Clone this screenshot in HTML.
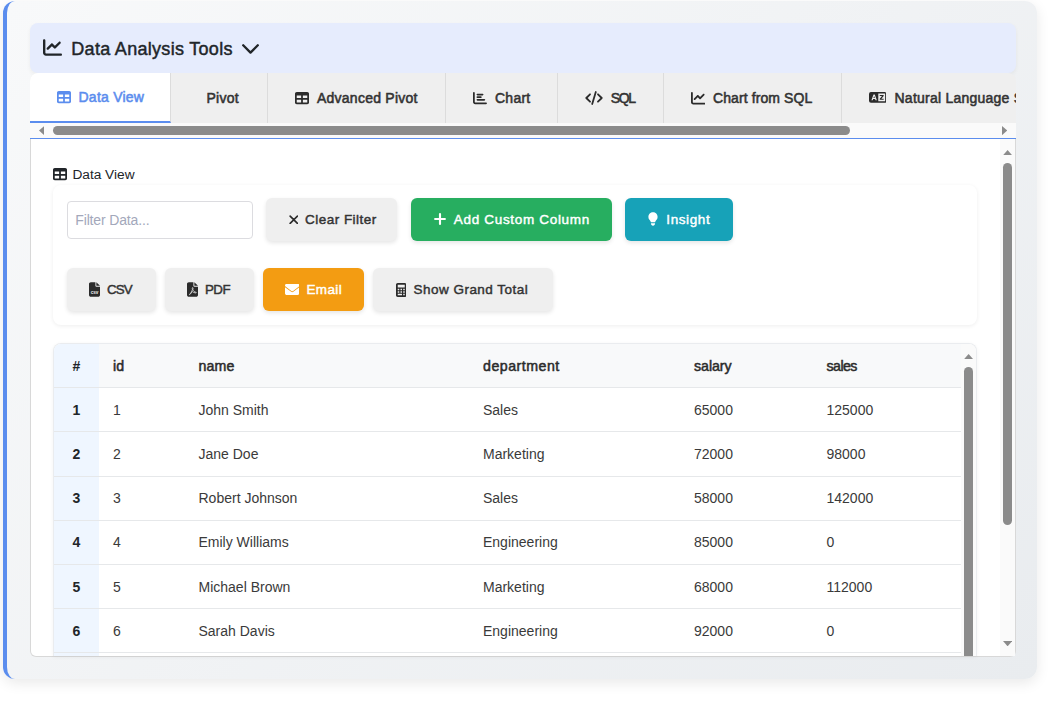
<!DOCTYPE html>
<html>
<head>
<meta charset="utf-8">
<title>Data Analysis Tools</title>
<style>
*{box-sizing:border-box;margin:0;padding:0}
html,body{width:1048px;height:703px;overflow:hidden;background:#fff}
body{font-family:"Liberation Sans",sans-serif;color:#212529;position:relative}
.abs,body>div,body>svg,body>span,body>div div,body>div span,body>div svg{position:absolute}
span{white-space:nowrap}
#card{left:3px;top:1px;width:1034.4px;height:677.7px;border-left:4px solid #5b8dee;border-radius:12px;
  background:linear-gradient(135deg,#f8f9fa 0%,#e9ecef 100%);box-shadow:0 4px 14px rgba(0,0,0,.09)}
#hdr{left:30px;top:23px;width:986px;height:50px;background:#e6ecfd;border-radius:8px;box-shadow:0 2px 4px rgba(0,0,0,.05)}
#hdr .t{left:41.300px;top:14.600px;font-size:18px;letter-spacing:.3px;line-height:22px;font-weight:400;color:#212529;-webkit-text-stroke:.45px #212529}
#tabs{left:30px;top:73px;width:986px;height:50px;background:#efefef;overflow:hidden;border-radius:8px 8px 0 0}
.tab{top:0;height:50px;border-right:1px solid #dcdcdc}
.tab span{top:0;font-size:14px;font-weight:400;color:#333;line-height:51.400px;letter-spacing:.24px;-webkit-text-stroke:.55px #333}
.tab svg{fill:#2b2b2b}
.tab.on{background:#fff;border-bottom:2px solid #5b8dee}
.tab.on span{color:#5b8dee;-webkit-text-stroke-color:#5b8dee;line-height:48.900px}
.tab.on svg{fill:#5b8dee}
#hsb{left:30px;top:123px;width:986px;height:15px;background:#fafafa}
#hsb .th{left:23px;top:3px;width:797px;height:9px;border-radius:4.5px;background:#8b8b8b}
.tri{width:0;height:0;border-style:solid}
#bline{left:30px;top:138px;width:986px;height:1px;background:#5b8dee}
#panel{left:30px;top:139px;width:986px;height:518px;background:#fff;border:1px solid #d8d8d8;border-top:none;border-radius:0 0 6px 6px;overflow:hidden}
</style>
</head>
<body>
<div id="card"></div>

<div id="hdr">
  <svg style="left:13px;top:15.3px" width="19" height="19" viewBox="0 0 512 512"><path fill="#212529" d="M64 64c0-17.700-14.300-32-32-32S0 46.300 0 64V400c0 44.200 35.800 80 80 80H480c17.700 0 32-14.300 32-32s-14.300-32-32-32H80c-8.800 0-16-7.200-16-16V64zm406.600 86.600c12.500-12.500 12.500-32.800 0-45.300s-32.800-12.500-45.300 0L320 210.700l-57.400-57.400c-12.500-12.500-32.800-12.500-45.300 0l-112 112c-12.500 12.500-12.500 32.800 0 45.300s32.800 12.500 45.300 0L240 221.300l57.400 57.400c12.500 12.500 32.800 12.500 45.300 0l128-128z"/></svg>
  <span class="t">Data Analysis Tools</span>
  <svg style="left:211px;top:20px" width="19" height="12" viewBox="0 0 19 12"><path d="M2.2 2.2 L9.5 9.6 L16.8 2.2" fill="none" stroke="#212529" stroke-width="2.3" stroke-linecap="round" stroke-linejoin="round"/></svg>
</div>

<div id="tabs">
  <div class="tab on" style="left:0;width:141px">
    <svg style="left:26.700px;top:16.600px" width="14" height="14" viewBox="0 0 512 512"><path fill-rule="evenodd" d="M64 32h384c35.300 0 64 28.700 64 64v320c0 35.300-28.700 64-64 64H64c-35.300 0-64-28.700-64-64V96c0-35.300 28.700-64 64-64zM64 160v96h160v-96zM288 160v96h160v-96zM64 320v96h160v-96zM288 320v96h160v-96z"/></svg>
    <span style="left:48.5px">Data View</span>
  </div>
  <div class="tab" style="left:141px;width:97px"><span style="left:35.5px">Pivot</span></div>
  <div class="tab" style="left:238px;width:178px">
    <svg style="left:26.500px;top:18px" width="14" height="14" viewBox="0 0 512 512"><path fill-rule="evenodd" d="M64 32h384c35.300 0 64 28.700 64 64v320c0 35.300-28.700 64-64 64H64c-35.300 0-64-28.700-64-64V96c0-35.300 28.700-64 64-64zM64 160v96h160v-96zM288 160v96h160v-96zM64 320v96h160v-96zM288 320v96h160v-96z"/></svg>
    <span style="left:49px">Advanced Pivot</span>
  </div>
  <div class="tab" style="left:416px;width:112px">
    <svg style="left:26.500px;top:18px" width="14" height="14" viewBox="0 0 512 512"><path d="M32 32c17.700 0 32 14.300 32 32v336c0 8.800 7.200 16 16 16h400c17.700 0 32 14.300 32 32s-14.300 32-32 32H80c-44.200 0-80-35.800-80-80V64c0-17.700 14.300-32 32-32zM128 128c0-17.700 14.300-32 32-32h192c17.700 0 32 14.300 32 32s-14.300 32-32 32H160c-17.700 0-32-14.300-32-32zM160 192h128c17.700 0 32 14.300 32 32s-14.300 32-32 32H160c-17.700 0-32-14.300-32-32s14.300-32 32-32zM160 288h256c17.700 0 32 14.300 32 32s-14.300 32-32 32H160c-17.700 0-32-14.300-32-32s14.300-32 32-32z"/></svg>
    <span style="left:49px">Chart</span>
  </div>
  <div class="tab" style="left:528px;width:106px">
    <svg style="left:27px;top:18px" width="18" height="14" viewBox="0 0 18 14"><path d="M5 3.300 L1.300 7 L5 10.700 M13 3.300 L16.700 7 L13 10.700 M10.800 1 L7.200 13" fill="none" stroke="#2b2b2b" stroke-width="1.800" stroke-linecap="round" stroke-linejoin="round"/></svg>
    <span style="left:52.700px;letter-spacing:-1.300px">SQL</span>
  </div>
  <div class="tab" style="left:634px;width:178px">
    <svg style="left:26.500px;top:18px" width="14.500" height="14.500" viewBox="0 0 512 512"><path d="M64 64c0-17.700-14.300-32-32-32S0 46.300 0 64V400c0 44.200 35.800 80 80 80H480c17.700 0 32-14.300 32-32s-14.300-32-32-32H80c-8.800 0-16-7.200-16-16V64zm406.600 86.600c12.500-12.500 12.500-32.800 0-45.300s-32.800-12.500-45.300 0L320 210.700l-57.400-57.400c-12.500-12.500-32.800-12.500-45.300 0l-112 112c-12.500 12.500-12.500 32.800 0 45.300s32.800 12.500 45.300 0L240 221.300l57.400 57.400c12.500 12.500 32.800 12.500 45.300 0l128-128z"/></svg>
    <span style="left:49px;letter-spacing:.1px">Chart from SQL</span>
  </div>
  <div class="tab" style="left:812px;width:260px;border-right:none">
    <svg style="left:26.700px;top:19.300px" width="17.600" height="10.800" viewBox="0 0 36 22"><path fill-rule="evenodd" d="M4 0h28a4 4 0 0 1 4 4v14a4 4 0 0 1-4 4H4a4 4 0 0 1-4-4V4a4 4 0 0 1 4-4zM19 3v16h14V3zM9.200 5 L5 17h2.600l.8-2.600h4.200l.8 2.600H16L11.800 5zM10.500 8.200l1.400 4.200H9.100zM22 6h8v2.200l-4.600 5.600H30V16h-8v-2.200l4.600-5.600H22z"/></svg>
    <span style="left:52.500px;">Natural Language SQL</span>
  </div>
</div>

<div id="hsb">
  <svg style="left:8.900px;top:3px" width="5.300" height="9.200" viewBox="0 0 5.300 9.200"><path fill="#8b8b8b" d="M5.300 0V9.200L0 4.600z"/></svg>
  <div class="th"></div>
  <svg style="left:972px;top:3px" width="5.300" height="9.200" viewBox="0 0 5.300 9.200"><path fill="#8b8b8b" d="M0 0V9.200L5.300 4.600z"/></svg>
</div>
<div id="bline"></div>
<div id="panel"></div>
<style>
.lbl{left:72.400px;top:166.500px;font-size:13.700px;line-height:16px;color:#212529}
#fcard{left:53px;top:185px;width:924px;height:140px;background:#fff;border-radius:8px;box-shadow:0 1px 4px rgba(0,0,0,.07)}
#inp{left:67px;top:201px;width:186px;height:38px;border:1px solid #dcdce0;border-radius:4px;background:#fff}
#inp span{left:7.300px;top:0;line-height:37px;font-size:14px;letter-spacing:-.15px;color:#a3a8bb}
.btn{border-radius:6px;background:#efefef;box-shadow:0 2px 4px rgba(0,0,0,.1);height:43px}
.btn span{top:0;line-height:44.600px;letter-spacing:.48px;font-size:13.500px;font-weight:400;color:#333;-webkit-text-stroke:.45px #333}
.btn.c span{color:#fff;-webkit-text-stroke-color:#fff}
.btn svg{fill:#2b2b2b}
.btn.c svg{fill:#fff}
#tbl{left:53px;top:343px;width:924px;height:313px;border:1px solid #eaecef;border-bottom:none;border-radius:8px 8px 0 0;overflow:hidden;background:#fff;box-shadow:0 1px 4px rgba(0,0,0,.05)}
#tbl .hd{left:0;top:0;width:907px;height:43px;background:#f8f9fa}
#tbl .nc{left:0;top:0;width:45px;height:320px;background:#eff6ff}
#tbl .ln{left:0;width:907px;height:1px;background:#e6e8ea}
#tbl span{font-size:14px;line-height:16px;color:#3a3a3a;letter-spacing:0}
#tbl span.h{font-weight:400;color:#2b2b2b;letter-spacing:.1px;font-size:14.200px;-webkit-text-stroke:.5px #2b2b2b}
#tbl span.n{font-weight:700;-webkit-text-stroke:0;color:#212529;left:0;width:45px;text-align:center;letter-spacing:0;font-size:14px}
.vsb{background:#fafafa;width:15px}
.vsb .th{left:3px;width:9px;border-radius:4.500px;background:#8b8b8b}
</style>
<svg style="left:52.800px;top:166.800px" width="14" height="14" viewBox="0 0 512 512"><path fill="#212529" fill-rule="evenodd" d="M64 32h384c35.300 0 64 28.700 64 64v320c0 35.300-28.700 64-64 64H64c-35.300 0-64-28.700-64-64V96c0-35.300 28.700-64 64-64zM64 160v96h160v-96zM288 160v96h160v-96zM64 320v96h160v-96zM288 320v96h160v-96z"/></svg>
<span class="lbl">Data View</span>
<div id="fcard"></div>
<div id="inp"><span>Filter Data...</span></div>

<div class="btn" style="left:266px;top:198px;width:131px">
  <svg style="left:22.800px;top:16.800px" width="9.600" height="9.600" viewBox="0 0 10 10"><path d="M1.200 1.200 L8.800 8.800 M8.800 1.200 L1.200 8.800" fill="none" stroke="#2b2b2b" stroke-width="1.700" stroke-linecap="round"/></svg>
  <span style="left:39px">Clear Filter</span>
</div>
<div class="btn c" style="left:411px;top:198px;width:201px;background:#27ae60">
  <svg style="left:22.700px;top:15.200px" width="12" height="12" viewBox="0 0 13 13"><path d="M6.500 1.200 V11.800 M1.200 6.500 H11.800" fill="none" stroke="#fff" stroke-width="2.300" stroke-linecap="round"/></svg>
  <span style="left:42.800px;letter-spacing:.68px">Add Custom Column</span>
</div>
<div class="btn c" style="left:625px;top:198px;width:108px;background:#17a2b8">
  <svg style="left:23px;top:14px" width="10" height="14" viewBox="0 0 384 512"><path d="M272 384c9.600-31.900 29.500-59.100 49.200-86.200c5.200-7.100 10.400-14.200 15.400-21.400c19.800-28.500 31.400-63 31.400-100.300C368 78.800 289.200 0 192 0S16 78.800 16 176c0 37.300 11.600 71.900 31.400 100.300c5 7.200 10.200 14.300 15.400 21.400c19.800 27.100 39.700 54.400 49.200 86.200H272zM192 512c44.200 0 80-35.800 80-80V416H112v16c0 44.200 35.800 80 80 80z"/></svg>
  <span style="left:41.300px;letter-spacing:.6px">Insight</span>
</div>

<div class="btn" style="left:67px;top:268px;width:89px">
  <svg style="left:21.500px;top:14px" width="11" height="15" viewBox="0 0 384 512"><path d="M64 0C28.700 0 0 28.700 0 64V448c0 35.300 28.700 64 64 64H320c35.300 0 64-28.700 64-64V160H256c-17.700 0-32-14.300-32-32V0H64zM256 0V128H384L256 0z"/><text x="192" y="410" font-size="190" font-weight="700" text-anchor="middle" textLength="270" lengthAdjust="spacingAndGlyphs" font-family="Liberation Sans" style="fill:#efefef">csv</text></svg>
  <span style="left:40px;font-size:13.300px;letter-spacing:-.8px">CSV</span>
</div>
<div class="btn" style="left:165px;top:268px;width:89px">
  <svg style="left:21.500px;top:14px" width="11" height="15" viewBox="0 0 384 512"><path d="M64 0C28.700 0 0 28.700 0 64V448c0 35.300 28.700 64 64 64H320c35.300 0 64-28.700 64-64V160H256c-17.700 0-32-14.300-32-32V0H64zM256 0V128H384L256 0z"/><path d="M90 420c40-30 80-90 100-170c-10-30-8-60 6-62c20-2 18 40 8 70c20 50 50 80 100 92c30 2 30 28-4 26c-40-4-80-20-110-44c-30 20-60 60-84 96c-12 14-30 4-16-8z" fill="none" stroke="#efefef" stroke-width="26"/></svg>
  <span style="left:40px;font-size:13.300px;letter-spacing:-.5px">PDF</span>
</div>
<div class="btn c" style="left:263px;top:268px;width:101px;background:#f39c12">
  <svg style="left:21.500px;top:16px" width="14.500" height="11" viewBox="0 0 512 384"><path d="M48 0C21.500 0 0 21.500 0 48c0 15.100 7.100 29.300 19.200 38.400L236.800 249.600c11.400 8.500 27 8.500 38.400 0L492.800 86.400C504.900 77.300 512 63.100 512 48c0-26.500-21.500-48-48-48H48zM0 112V320c0 35.300 28.700 64 64 64H448c35.300 0 64-28.700 64-64V112L294.400 275.200c-22.800 17.100-54 17.100-76.800 0L0 112z"/></svg>
  <span style="left:43.500px;font-size:13.500px;letter-spacing:.35px">Email</span>
</div>
<div class="btn" style="left:373px;top:268px;width:180px">
  <svg style="left:22.500px;top:14.500px" width="10.500" height="14" viewBox="0 0 384 512"><path fill-rule="evenodd" d="M64 0C28.700 0 0 28.700 0 64V448c0 35.300 28.700 64 64 64H320c35.300 0 64-28.700 64-64V64c0-35.300-28.700-64-64-64H64zM64 64H320v96H64zM64 208h56v56H64zM164 208h56v56h-56zM264 208h56v56h-56zM64 300h56v56H64zM164 300h56v56h-56zM264 300h56v56h-56zM64 392h156v56H64zM264 392h56v56h-56z"/></svg>
  <span style="left:40.500px">Show Grand Total</span>
</div>

<div id="tbl">
  <div class="hd"></div>
  <div class="nc"></div>
  <div class="ln" style="top:43px"></div>
  <div class="ln" style="top:87px"></div>
  <div class="ln" style="top:132px"></div>
  <div class="ln" style="top:176px"></div>
  <div class="ln" style="top:220px"></div>
  <div class="ln" style="top:264px"></div>
  <div class="ln" style="top:308px"></div>
  <span class="h n" style="top:14.400px">#</span>
  <span class="h" style="top:14.400px;left:59px">id</span>
  <span class="h" style="top:14.400px;left:144.5px">name</span>
  <span class="h" style="top:14.400px;left:429px;letter-spacing:.5px">department</span>
  <span class="h" style="top:14.400px;left:640px;letter-spacing:-.05px">salary</span>
  <span class="h" style="top:14.400px;left:772.5px;letter-spacing:-.55px">sales</span>
  <span class="n" style="top:58.2px">1</span>
  <span style="left:59px;top:58.2px">1</span>
  <span style="left:144.5px;top:58.2px">John Smith</span>
  <span style="left:429px;top:58.2px">Sales</span>
  <span style="left:640px;top:58.2px">65000</span>
  <span style="left:772.5px;top:58.2px">125000</span>
  <span class="n" style="top:102.4px">2</span>
  <span style="left:59px;top:102.4px">2</span>
  <span style="left:144.5px;top:102.4px">Jane Doe</span>
  <span style="left:429px;top:102.4px">Marketing</span>
  <span style="left:640px;top:102.4px">72000</span>
  <span style="left:772.5px;top:102.4px">98000</span>
  <span class="n" style="top:146px">3</span>
  <span style="left:59px;top:146px">3</span>
  <span style="left:144.5px;top:146px">Robert Johnson</span>
  <span style="left:429px;top:146px">Sales</span>
  <span style="left:640px;top:146px">58000</span>
  <span style="left:772.5px;top:146px">142000</span>
  <span class="n" style="top:190.3px">4</span>
  <span style="left:59px;top:190.3px">4</span>
  <span style="left:144.5px;top:190.3px">Emily Williams</span>
  <span style="left:429px;top:190.3px">Engineering</span>
  <span style="left:640px;top:190.3px">85000</span>
  <span style="left:772.5px;top:190.3px">0</span>
  <span class="n" style="top:235px">5</span>
  <span style="left:59px;top:235px">5</span>
  <span style="left:144.5px;top:235px">Michael Brown</span>
  <span style="left:429px;top:235px">Marketing</span>
  <span style="left:640px;top:235px">68000</span>
  <span style="left:772.5px;top:235px">112000</span>
  <span class="n" style="top:279px">6</span>
  <span style="left:59px;top:279px">6</span>
  <span style="left:144.5px;top:279px">Sarah Davis</span>
  <span style="left:429px;top:279px">Engineering</span>
  <span style="left:640px;top:279px">92000</span>
  <span style="left:772.5px;top:279px">0</span>
  <div class="vsb" style="left:907px;top:0;height:320px">
    <svg style="left:2.900px;top:9.800px" width="9.200" height="5.200" viewBox="0 0 9.200 5.200"><path fill="#8b8b8b" d="M0 5.200H9.200L4.600 0z"/></svg>
    <div class="th" style="top:23px;height:300px;border-radius:4.500px 4.500px 0 0"></div>
  </div>
</div>

<div class="vsb" style="left:1000px;top:139px;height:517px">
  <svg style="left:2.900px;top:10.700px" width="9.200" height="5.300" viewBox="0 0 9.200 5.300"><path fill="#8b8b8b" d="M0 5.300H9.200L4.600 0z"/></svg>
  <div class="th" style="top:24px;height:362px"></div>
  <svg style="left:2.900px;top:501.700px" width="9.200" height="5.300" viewBox="0 0 9.200 5.300"><path fill="#8b8b8b" d="M0 0H9.200L4.600 5.300z"/></svg>
</div>

</body>
</html>
